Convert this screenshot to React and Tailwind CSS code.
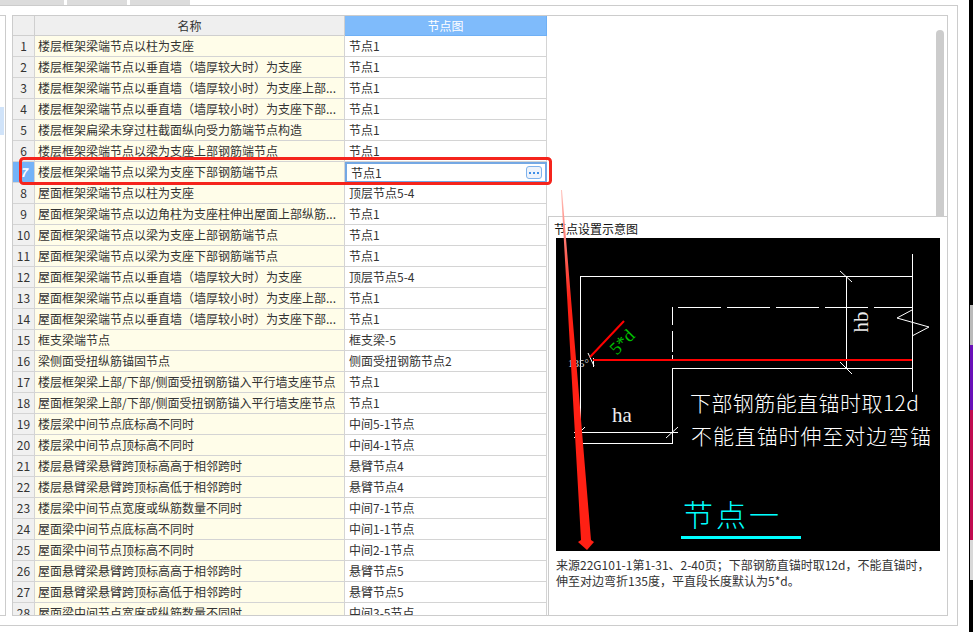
const rows = [
  ["楼层框架梁端节点以柱为支座", "节点1"],
  ["楼层框架梁端节点以垂直墙（墙厚较大时）为支座", "节点1"],
  ["楼层框架梁端节点以垂直墙（墙厚较小时）为支座上部...", "节点1"],
  ["楼层框架梁端节点以垂直墙（墙厚较小时）为支座下部...", "节点1"],
  ["楼层框架扁梁未穿过柱截面纵向受力筋端节点构造", "节点1"],
  ["楼层框架梁端节点以梁为支座上部钢筋端节点", "节点1"],
  ["楼层框架梁端节点以梁为支座下部钢筋端节点", "节点1"],
  ["屋面框架梁端节点以柱为支座", "顶层节点5-4"],
  ["屋面框架梁端节点以边角柱为支座柱伸出屋面上部纵筋...", "节点1"],
  ["屋面框架梁端节点以梁为支座上部钢筋端节点", "节点1"],
  ["屋面框架梁端节点以梁为支座下部钢筋端节点", "节点1"],
  ["屋面框架梁端节点以垂直墙（墙厚较大时）为支座", "顶层节点5-4"],
  ["屋面框架梁端节点以垂直墙（墙厚较小时）为支座上部...", "节点1"],
  ["屋面框架梁端节点以垂直墙（墙厚较小时）为支座下部...", "节点1"],
  ["框支梁端节点", "框支梁-5"],
  ["梁侧面受扭纵筋锚固节点", "侧面受扭钢筋节点2"],
  ["楼层框架梁上部/下部/侧面受扭钢筋锚入平行墙支座节点", "节点1"],
  ["屋面框架梁上部/下部/侧面受扭钢筋锚入平行墙支座节点", "节点1"],
  ["楼层梁中间节点底标高不同时", "中间5-1节点"],
  ["楼层梁中间节点顶标高不同时", "中间4-1节点"],
  ["楼层悬臂梁悬臂跨顶标高高于相邻跨时", "悬臂节点4"],
  ["楼层悬臂梁悬臂跨顶标高低于相邻跨时", "悬臂节点4"],
  ["楼层梁中间节点宽度或纵筋数量不同时", "中间7-1节点"],
  ["屋面梁中间节点底标高不同时", "中间1-1节点"],
  ["屋面梁中间节点顶标高不同时", "中间2-1节点"],
  ["屋面悬臂梁悬臂跨顶标高高于相邻跨时", "悬臂节点5"],
  ["屋面悬臂梁悬臂跨顶标高低于相邻跨时", "悬臂节点5"],
  ["屋面梁中间节点宽度或纵筋数量不同时", "中间3-5节点"],
];

const cjk = "'Noto Sans CJK SC', sans-serif";
const serif = "'Liberation Serif', 'Noto Sans CJK SC', serif";

function Diagram() {
  return (
    <svg viewBox="556 238 384 313" className="block w-[384px] h-[313px] bg-black" shapeRendering="crispEdges">
      <g stroke="#fff" strokeWidth="1" fill="none">
        <path d="M912.5 276.5H580.5V443.5H672.5V368" />
        <path d="M672.5 368.5H912.5" />
        <path d="M912.5 254V392" />
        <path d="M846.5 276V368" />
        <path d="M672.5 307V325M672.5 331V352M672.5 355V360" />
        <path d="M678 307.5H912" strokeDasharray="43 6" />
        <path d="M574 432.5H678" />
      </g>
      <g stroke="#fff" strokeWidth="1" fill="none" shapeRendering="auto">
        <path d="M840 271L852 282M840 362L852 374M574 438L585 427M666 438L678 427" />
        <path d="M912 310L897 318L929 327L912 336" />
        <path d="M588 353L594 366M593.5 358V367" />
      </g>
      <path d="M593 360H912" stroke="#f00" strokeWidth="2" />
      <path d="M590 357L624 321" stroke="#f00" strokeWidth="2" shapeRendering="auto" />
      <text x="622" y="422" fill="#eee" fontSize="21" textAnchor="middle" style={{ fontFamily: serif }}>ha</text>
      <text x="868" y="322" fill="#eee" fontSize="21" textAnchor="middle" transform="rotate(-90 868 322)" style={{ fontFamily: serif }}>hb</text>
      <text x="622" y="348" fill="#00c000" fontSize="18" textAnchor="middle" transform="rotate(-45 622 342)" style={{ fontFamily: serif }}>5*d</text>
      <text x="568" y="367" fill="#ddd" fontSize="11" style={{ fontFamily: serif }}>135°</text>
      <text x="690" y="411" fill="#fff" fontSize="21" fontWeight="300" textLength="229" style={{ fontFamily: cjk }}>下部钢筋能直锚时取12d</text>
      <text x="691" y="444" fill="#fff" fontSize="21" fontWeight="300" textLength="240" style={{ fontFamily: cjk }}>不能直锚时伸至对边弯锚</text>
      <text x="683" y="526" fill="#0ff" fontSize="30" fontWeight="300" textLength="96" style={{ fontFamily: cjk }}>节点一</text>
      <rect x="681" y="536" width="120" height="3" fill="#0ff" />
    </svg>
  );
}

export default function App() {
  return (
    <div className="relative w-[973px] h-[632px] overflow-hidden bg-white text-[12px] text-[#333] font-['Noto_Sans_CJK_SC',sans-serif]">
      <div className="flex h-[5px] gap-[3px] bg-white">
        <div className="w-[64px] bg-[#dcdcdc]" />
        <div className="w-[60px] bg-[#dcdcdc]" />
        <div className="w-[60px] bg-[#dcdcdc]" />
      </div>

      <div className="flex w-[958px] h-[621px] pt-[9px] border-y border-r border-[#ccc]">
        <div className="w-[6px] h-[601px] border-y border-r border-[#ccc] pt-[91px]">
          <div className="h-[28px] w-[4px] bg-[#d0e3f9]" />
        </div>

        <div className="flex ml-[6px] w-[936px] h-[601px] border border-[#ccc] overflow-hidden">
          <div className="w-[535px] shrink-0 overflow-hidden">
            <div className="flex h-[20px] leading-[19px]">
              <div className="w-[22px] bg-[#efefef] border-r border-b border-[#cfcfcf]" />
              <div className="w-[310px] text-center bg-[#efefef] border-r border-b border-[#cfcfcf]">名称</div>
              <div className="w-[202px] text-center bg-[#7fbbfb] text-white border-r border-b border-[#6fb0f5]">节点图</div>
            </div>
            {rows.map(([name, node], i) => {
              const active = i === 6;
              return (
                <div key={i} className="flex h-[21px]">
                  <div className={active
                    ? "w-[22px] flex items-center justify-center bg-[#74b3f8] text-white font-bold italic border-r border-b border-[#d4d4d4]"
                    : "w-[22px] flex items-center justify-center bg-[#f0f0f0] border-r border-b border-[#d4d4d4]"}>{i + 1}</div>
                  <div className="w-[310px] flex items-center pl-[3px] whitespace-nowrap overflow-hidden bg-[#fffde9] border-r border-b border-[#d4d4d4]">{name}</div>
                  {active ? (
                    <div className="w-[202px] flex items-center justify-between pl-[4px] pr-[3px] bg-white border-2 border-[#74a8e4]">
                      <span>{node}</span>
                      <span className="flex items-center justify-center gap-[2px] w-[16px] h-[13px] rounded-[3px] bg-[#eef3fb] border border-[#7fb2ec]">
                        <i className="block w-[2px] h-[2px] bg-[#3f8fe8]" />
                        <i className="block w-[2px] h-[2px] bg-[#3f8fe8]" />
                        <i className="block w-[2px] h-[2px] bg-[#3f8fe8]" />
                      </span>
                    </div>
                  ) : (
                    <div className="w-[202px] flex items-center pl-[4px] whitespace-nowrap bg-white border-r border-b border-[#d4d4d4]">{node}</div>
                  )}
                </div>
              );
            })}
          </div>

          <div className="flex flex-col flex-1 min-w-0">
            <div className="flex justify-end h-[200px] shrink-0 pr-[3px] pt-[14px]">
              <div className="w-[8px] h-[186px] rounded-t-[4px] bg-[#cccccc]" />
            </div>
            <div className="flex-1 border-l border-t border-[#ccc]">
              <div className="flex items-center h-[21px] pt-[3px] pl-[5px] text-[#111]">节点设置示意图</div>
              <div className="ml-[7px]">
                <Diagram />
                <p className="mt-[6px] leading-[16px] whitespace-nowrap">
                  来源22G101-1第1-31、2-40页；下部钢筋直锚时取12d，不能直锚时，<br />
                  伸至对边弯折135度，平直段长度默认为5*d。
                </p>
              </div>
            </div>
          </div>
        </div>
      </div>

      <div className="absolute top-0 right-0 w-[4px] h-full bg-black pl-px pt-[305px] flex flex-col">
        <div className="h-[40px] bg-[#b9b9b9]" />
        <div className="h-[65px] bg-[#6a10b8]" />
        <div className="h-[130px] bg-[#c00c50]" />
        <div className="h-[40px] bg-[#d8d8d8]" />
      </div>

      <svg viewBox="0 0 973 632" className="absolute inset-0 w-[973px] h-[632px] pointer-events-none">
        <defs>
          <linearGradient id="fade" x1="0" y1="190" x2="0" y2="300" gradientUnits="userSpaceOnUse">
            <stop offset="0" stopColor="#ffc4bd" />
            <stop offset="1" stopColor="#ff2014" />
          </linearGradient>
        </defs>
        <rect x="20.5" y="158.5" width="530" height="25" rx="3" fill="none" stroke="#f5241c" strokeWidth="3" />
        <polygon points="561,190 562,190 591,540 594,542 587,550 578,542 581,540" fill="url(#fade)" />
      </svg>
    </div>
  );
}
